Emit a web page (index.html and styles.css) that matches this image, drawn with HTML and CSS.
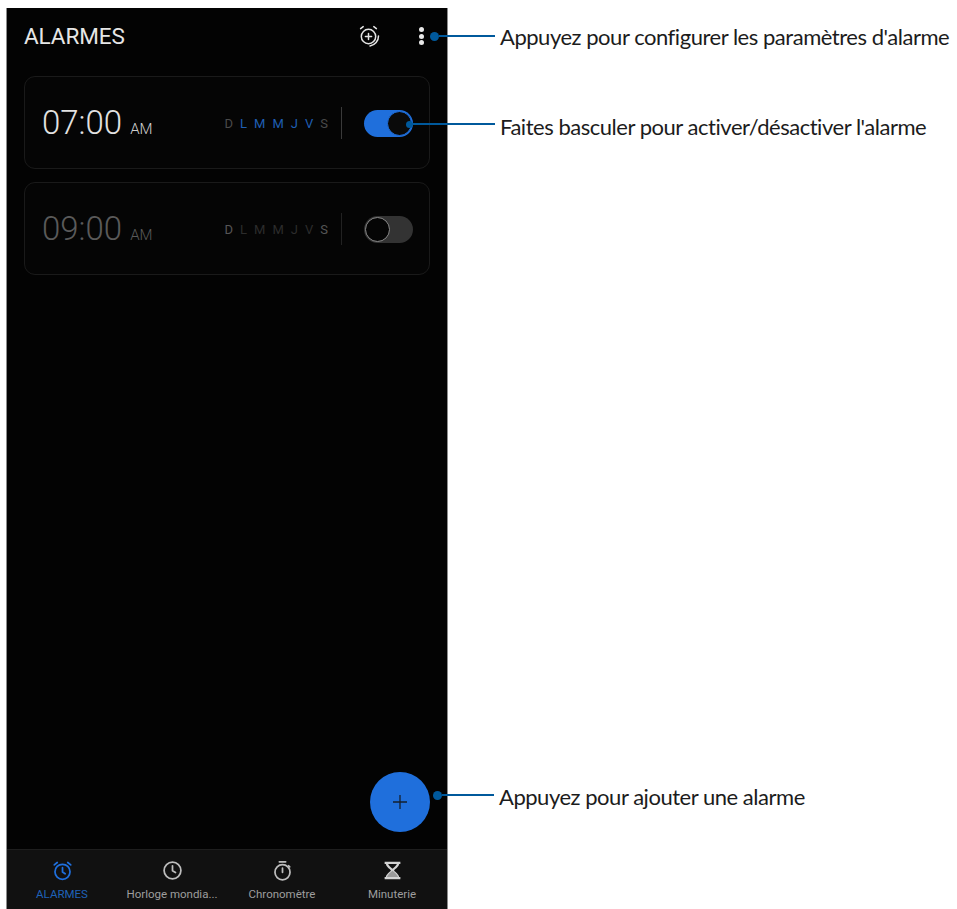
FILE: index.html
```html
<!DOCTYPE html>
<html lang="fr">
<head>
<meta charset="utf-8">
<title>Alarmes</title>
<link rel="stylesheet" href="styles.css">
</head>
<body>
<main class="stage">
  <section class="phone">
    <header class="topbar">
      <h1 class="title">ALARMES</h1>
      <svg class="icon-add" viewBox="0 0 24 24" fill="none" stroke="#e4e4e4" stroke-width="1.5" stroke-linecap="round">
        <circle cx="11.5" cy="12.5" r="7.2"/>
        <path d="M11.5 9.4v6.2M8.4 12.5h6.2"/>
        <path d="M3.6 4.6 6.2 2.6M16.8 2.6l2.6 2"/>
        <path d="M21.5 12a10 10 0 0 1-8.5 10"/>
      </svg>
      <div class="kebab"><i></i><i></i><i></i></div>
    </header>

    <div class="list">
      <article class="card">
        <p class="time">07:00<span class="ampm">AM</span></p>
        <p class="days"><span>D</span><b>L</b><b>M</b><b>M</b><b>J</b><b>V</b><span>S</span></p>
        <span class="divider"></span>
        <span class="toggle on"><span class="knob"></span></span>
      </article>
      <article class="card off">
        <p class="time">09:00<span class="ampm">AM</span></p>
        <p class="days"><span class="lit">D</span><span>L</span><span>M</span><span>M</span><span>J</span><span>V</span><span class="lit">S</span></p>
        <span class="divider"></span>
        <span class="toggle"><span class="knob"></span></span>
      </article>
    </div>

    <div class="fab-row">
      <button class="fab" type="button" aria-label="Ajouter">
        <svg viewBox="0 0 16 16" fill="none" stroke="#14202e" stroke-width="1.3"><path d="M8 1v14M1 8h14"/></svg>
      </button>
    </div>

    <nav class="tabs">
      <div class="tab active">
        <svg viewBox="0 0 24 24" fill="none" stroke="#1f6fdc" stroke-width="2" stroke-linecap="round" stroke-linejoin="round">
          <circle cx="12" cy="13.5" r="8.6"/><path d="M12 8.8v5l3 2"/><path d="M2.6 5.6 6 2.8M18 2.8l3.4 2.8"/>
        </svg>
        <span>ALARMES</span>
      </div>
      <div class="tab">
        <svg viewBox="0 0 24 24" fill="none" stroke="#bdbdbd" stroke-width="2" stroke-linecap="round" stroke-linejoin="round">
          <circle cx="12" cy="12" r="9.6"/><path d="M12 6.6v5.8l3.4 2"/>
        </svg>
        <span>Horloge mondia...</span>
      </div>
      <div class="tab">
        <svg viewBox="0 0 24 24" fill="none" stroke="#bdbdbd" stroke-width="2" stroke-linecap="round" stroke-linejoin="round">
          <circle cx="12" cy="14" r="8.6"/><path d="M8.4 2h7.2M12 9.4v4.6M19 6.6l1.2 1.2"/>
        </svg>
        <span>Chronomètre</span>
      </div>
      <div class="tab">
        <svg viewBox="0 0 24 24" stroke="none">
          <path fill="#d4d4d4" d="M3 2h18v2.6h-1.4c-.4 3.2-4.4 5.4-5.8 7.4 1.4 2 5.4 4.2 5.8 7.4H21V22H3v-2.6h1.4c.4-3.2 4.4-5.4 5.8-7.4C8.8 10 4.800 7.800 4.400 4.600H3Z"/>
          <path fill="#111111" d="M7 4.600h10c-.6 2-3.400 3.700-5 5.500-1.600-1.800-4.400-3.500-5-5.500Z"/>
          <path fill="#9a9a9a" d="M5.600 19.400c.8-2.800 4.400-5 6.400-7 2 2 5.600 4.200 6.400 7Z"/>
        </svg>
        <span>Minuterie</span>
      </div>
    </nav>
  </section>

  <div class="callout c1"><span class="dot"></span><span class="line"></span><span class="label">Appuyez pour configurer les paramètres d'alarme</span></div>
  <div class="callout c2"><span class="dot"></span><span class="line"></span><span class="label">Faites basculer pour activer/désactiver l'alarme</span></div>
  <div class="callout c3"><span class="dot"></span><span class="line"></span><span class="label">Appuyez pour ajouter une alarme</span></div>
</main>
</body>
</html>
```
FILE: styles.css
```css
* { box-sizing: border-box; }
html, body { margin: 0; padding: 0; background: #fff; }
body { width: 957px; height: 909px; overflow: hidden; font-family: Roboto, "Liberation Sans", sans-serif; }
.stage { position: relative; width: 957px; height: 909px; padding: 8px 0 0 6px; }

.phone {
  width: 442px; height: 901px; background: #030303;
  border-left: 1px solid #8c8c8c; border-right: 1px solid #8c8c8c;
  display: flex; flex-direction: column;
}

.topbar { height: 68px; display: flex; align-items: center; padding: 0 0 12px 17px; flex: none; }
.title { margin: 0; flex: 1; font-size: 22.500px; font-weight: 400; color: #e6e6e6; letter-spacing: -0.1px; }
.icon-add { width: 24px; height: 24px; margin: -1px 38px 0 0; }
.kebab { display: flex; flex-direction: column; gap: 1.500px; margin-right: 23px; }
.kebab i { width: 5px; height: 5px; border-radius: 50%; background: #e8e8e8; }

.list { padding: 0 17px; display: flex; flex-direction: column; gap: 13px; flex: none; }
.card {
  height: 93px; border: 1px solid #1a1a1a; border-radius: 11px; background: #050505;
  display: flex; align-items: center; padding: 1px 16px 0 17px;
}
.time { margin: -1px 0 0; flex: 1; font-size: 33px; font-weight: 300; color: #e2e2e2; white-space: nowrap; }
.ampm { font-size: 15px; font-weight: 300; margin-left: 8px; color: #d0d0d0; }
.days { margin: 0; display: flex; gap: 7px; font-size: 13px; color: #4a4a4a; }
.days b { font-weight: 400; color: #1f5fb4; }
.divider { width: 1px; height: 32px; background: #3a3a3a; margin: 0 22px 0 13px; }

.toggle { width: 49px; height: 27px; border-radius: 14px; background: #333; display: flex; align-items: center; justify-content: flex-start; }
.toggle.on { background: #1f6fdc; justify-content: flex-end; }
.knob { width: 25px; height: 25px; border-radius: 50%; background: #050505; margin: 0 1px; border: 1px solid #8a8a8a; }
.toggle.on .knob { border-color: #1f6fdc; background: #0a0a0a; }

.off .time { color: #5a5a5a; }
.off .ampm { color: #5a5a5a; }
.off .days { color: #2c2c2c; }
.off .days .lit { color: #565656; }
.off .divider { background: #222; }

.fab-row { flex: 1; display: flex; align-items: flex-end; justify-content: flex-end; padding: 0 17px 17px 0; }
.fab { width: 60px; height: 60px; border-radius: 50%; border: 0; padding: 0; background: #1f6fdc; display: flex; align-items: center; justify-content: center; }
.fab svg { width: 16px; height: 16px; }

.tabs { height: 60px; flex: none; background: #111; border-top: 1px solid #1e1e1e; display: grid; grid-template-columns: repeat(4, 1fr); }
.tab { display: flex; flex-direction: column; align-items: center; padding-top: 10px; gap: 6px; font-size: 11.500px; color: #9e9e9e; white-space: nowrap; }
.tab svg { width: 21px; height: 21px; }
.tab.active { color: #1f62b8; }

.callout { position: absolute; left: 430px; display: flex; align-items: center; height: 30px; }
.dot { width: 9px; height: 9px; border-radius: 50%; background: #00599c; flex: none; }
.line { height: 2px; background: #00599c; flex: none; }
.label {
  font-family: Lato, "Open Sans", sans-serif; font-size: 22px; color: #1c1c1c; letter-spacing: -0.47px;
  white-space: nowrap; margin-left: 5px;
}
.c1 { top: 21px; }
.c1 .line { width: 56px; }
.c2 { top: 109px; left: 406px; }
.c2 .dot { width: 7px; height: 7px; }
.c2 .line { width: 82px; }
.c2 .label { margin-top: 4px; }
.c3 { top: 780px; left: 433px; }
.c3 .line { width: 52px; }
.c3 .label { margin-left: 5px; margin-top: 3px; }
```
